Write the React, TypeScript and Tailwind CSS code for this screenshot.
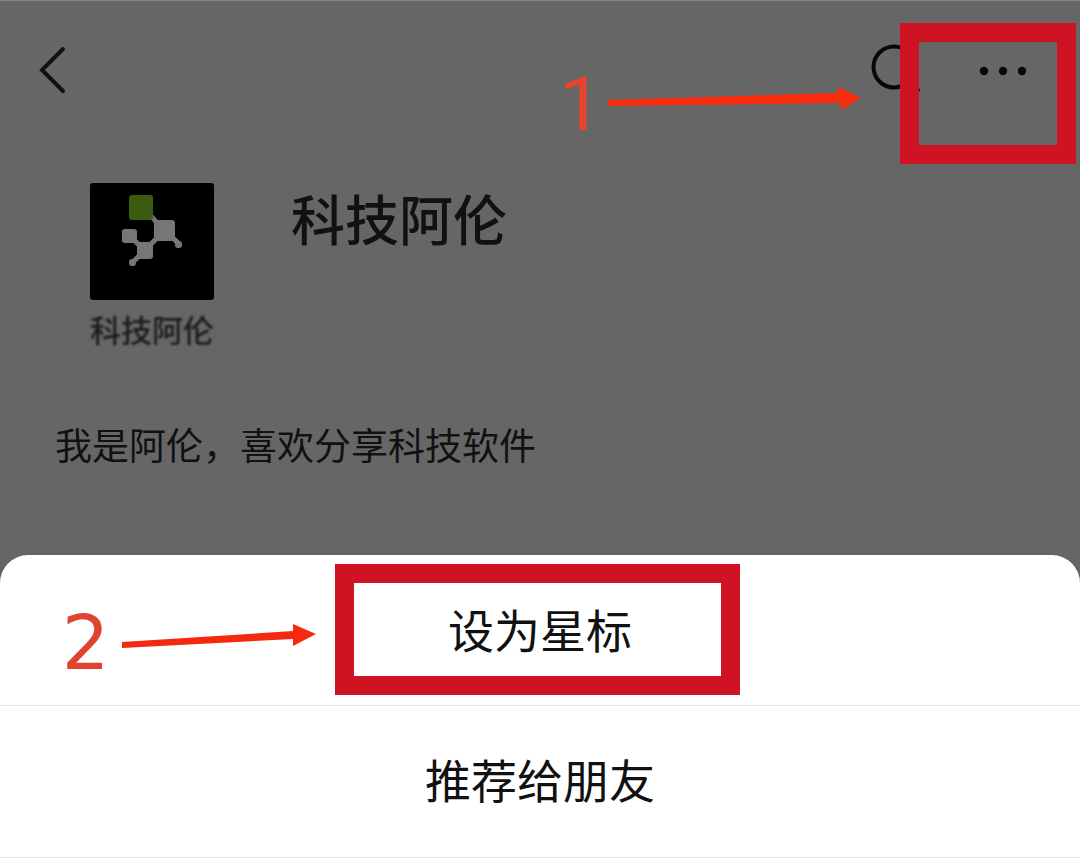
const bodyFont = "font-['Noto_Sans_CJK_SC',sans-serif]";

function Logo() {
  return (
    <svg viewBox="0 0 124 117" className="block h-[117px] w-[124px]" role="img" aria-label="科技阿伦">
      <rect width="124" height="117" rx="3" fill="#000" />
      <g stroke="#767676" strokeWidth="5" strokeLinecap="round">
        <path d="M62 34 L67 40" />
        <path d="M84 56 L89 61" />
        <path d="M66 56 L60 62" />
        <path d="M45 58 L49 62" />
        <path d="M49 73 L43 79" />
      </g>
      <rect x="64" y="37" width="21" height="21" rx="3" fill="#767676" />
      <rect x="32" y="46" width="15" height="14" rx="3" fill="#767676" />
      <rect x="47" y="59" width="16" height="17" rx="3" fill="#767676" />
      <rect x="85" y="58" width="7" height="7" rx="3" fill="#767676" />
      <rect x="39" y="76" width="7" height="7" rx="3" fill="#767676" />
      <rect x="39" y="12" width="24" height="25" rx="3" fill="#3d5b10" />
    </svg>
  );
}

export default function App() {
  return (
    <div className={`flex min-h-screen flex-col overflow-hidden border-t border-[#858585] bg-[#666] text-[#111] ${bodyFont}`}>
      <header className="flex items-start justify-between pt-[22px] pr-1 pl-9">
        <button type="button" aria-label="返回" className="mt-5">
          <svg viewBox="0 0 36 52" className="block h-[52px] w-9" fill="none" stroke="#111" strokeWidth="4" strokeLinecap="round">
            <path d="M27 6 L6 27 L27 48" />
          </svg>
        </button>
        <div className="relative flex items-start">
          <div className="absolute top-0 right-full mr-2 flex items-start">
            <span className="mt-9 mr-1 font-[Roboto,sans-serif] text-[76px] leading-[90px] text-[#e8432f]">1</span>
            <svg viewBox="0 0 256 30" className="mt-[60px] block h-[30px] w-64" fill="#fb2d0e" aria-hidden="true">
              <path d="M2 17 L232 10 V4 L255 15 L235 27 V20 L2 23 Z" />
            </svg>
          </div>
          <button type="button" aria-label="搜索" className="-mr-5 mt-[19px]">
            <svg viewBox="0 0 50 50" className="block h-[50px] w-[50px]" fill="none" stroke="#080808" strokeWidth="4" strokeLinecap="round">
              <circle cx="24" cy="25" r="20.5" />
              <path d="M38 40 L48 48" />
            </svg>
          </button>
          <button type="button" aria-label="更多" className="flex h-[141px] w-44 justify-end border-[19px] border-[#cf1322] pt-[22px] pr-7">
            <svg viewBox="0 0 54 12" className="block h-3 w-[54px]" fill="#080808">
              <circle cx="9" cy="7" r="4.2" />
              <circle cx="28" cy="7" r="4.2" />
              <circle cx="47" cy="7" r="4.2" />
            </svg>
          </button>
        </div>
      </header>

      <main className="flex flex-col pb-[83px]">
        <section className="flex gap-[77px] pt-[19px] pl-[90px]">
          <div className="w-[124px]">
            <Logo />
            <p className="mt-1 text-[31px] leading-[50px] font-medium whitespace-nowrap text-[#1c1c1c] blur-[1px]">科技阿伦</p>
          </div>
          <h1 className="text-[54px] leading-[70px] font-medium">科技阿伦</h1>
        </section>
        <p className="pt-[62px] pl-[55px] text-[37px] leading-[56px]">我是阿伦，喜欢分享科技软件</p>
      </main>

      <div className="flex flex-1 flex-col rounded-t-[28px] bg-white shadow-[0_8px_12px_rgba(0,0,0,0.3)]">
        <div className="flex h-[151px] justify-center border-b border-[#e8e8e8] pt-[9px] pr-[6px]">
          <div className="relative h-[131px] w-[405px]">
            <div className="absolute top-0 right-full mr-[17px] flex items-start">
              <span className="mt-[34px] mr-2 font-['DejaVu_Sans',sans-serif] text-[75px] leading-[90px] text-[#e0432f]">2</span>
              <svg viewBox="0 0 200 30" className="mt-[55px] block h-[30px] w-[200px]" fill="#f42a10" aria-hidden="true">
                <path d="M4 23 L175 12 V5 L198 15 L175 27 V20 L4 29 Z" />
              </svg>
            </div>
            <button type="button" className="h-full w-full border-[19px] border-[#cf1322] bg-white pb-1 pl-[6px] text-[46px] leading-[86px]">
              设为星标
            </button>
          </div>
        </div>
        <button type="button" className="h-[152px] border-b border-[#e8e8e8] pb-[6px] text-[46px] leading-[145px]">
          推荐给朋友
        </button>
      </div>
    </div>
  );
}
